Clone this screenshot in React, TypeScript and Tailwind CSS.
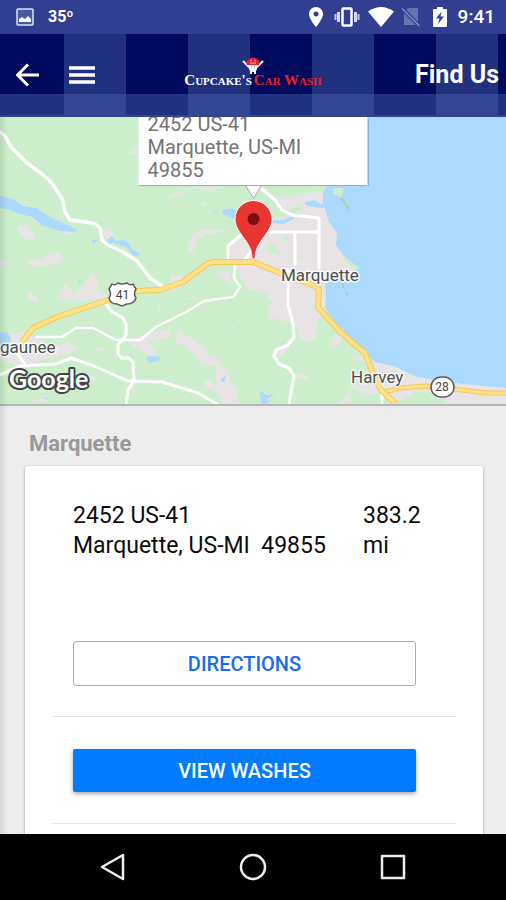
import type { ReactNode } from "react";

function StatusBar() {
  return (
    <div className="flex h-[34px] shrink-0 items-center justify-between bg-[#323f91] pl-4 pr-[11px] text-white">
      <div className="flex items-center gap-[14px]">
        <svg viewBox="0 0 18 18" className="h-[18px] w-[18px]" aria-hidden="true">
          <rect x="1" y="1" width="16" height="16" rx="1" fill="#4c589f" stroke="#dfe2f2" strokeWidth="1.5" />
          <path d="M3 14V11L6 9l3 2 3-3 3 3v3z" fill="#fff" />
        </svg>
        <span className="text-[16px] font-bold leading-5">35º</span>
      </div>
      <div className="flex items-center">
        <svg viewBox="0 0 14 20" className="h-5 w-[14px]" aria-hidden="true">
          <path fillRule="evenodd" d="M7 0C3 0 0 3 0 7c0 5 7 13 7 13s7-8 7-13c0-4-3-7-7-7zm0 4.5a2.5 2.5 0 1 1 0 5 2.5 2.5 0 0 1 0-5z" fill="#fff" />
        </svg>
        <svg viewBox="0 0 26 20" className="ml-[11px] h-5 w-[26px]" aria-hidden="true">
          <rect x="8.500" y="1.500" width="9" height="17" rx="1" fill="#323f91" stroke="#fff" strokeWidth="2.500" />
          <path d="M4.500 5v10M21.500 5v10" stroke="#d5d9ec" strokeWidth="3" />
          <path d="M1.500 7v6M24.500 7v6" stroke="#c5cae5" strokeWidth="2" />
        </svg>
        <svg viewBox="0 0 26 20" className="ml-2 h-5 w-[26px]" aria-hidden="true">
          <path d="M0 4.500Q13-4.500 26 4.500L13 20z" fill="#fff" />
        </svg>
        <svg viewBox="0 0 20 20" className="ml-[7px] h-5 w-5" aria-hidden="true">
          <path d="M7 1h10v17H3V6z" fill="#6973b1" />
          <path d="M1 1.500L19 19.500" stroke="#323f91" strokeWidth="4" />
          <path d="M1 1.500L18.500 19" stroke="#8991c3" strokeWidth="1.5" />
        </svg>
        <svg viewBox="0 0 14 20" className="ml-3 h-5 w-[14px]" aria-hidden="true">
          <path d="M4 0h6v2h3q1 0 1 1v16q0 1-1 1H1q-1 0-1-1V3q0-1 1-1h3z" fill="#fff" />
          <path d="M8.500 4.500L3 11.500h3.500L5 17l6-7.500H7.500z" fill="#323f91" />
        </svg>
        <span className="ml-[11px] text-[19px] font-medium leading-5">9:41</span>
      </div>
    </div>
  );
}

function Logo() {
  return (
    <div className="flex flex-col items-center pb-1" role="img" aria-label="Cupcake's Car Wash">
      <svg viewBox="0 0 22 17" className="h-[17px] w-[22px]" aria-hidden="true">
        <path d="M1 4l6 6M21 4l-6 6" stroke="#fff" strokeWidth="2" />
        <path d="M6 8h10l-1 4-1 2v3h-2v-2h-2v2H8v-3l-1-2z" fill="#fff" />
        <path d="M5 8C3 5 6 3 7 2c2-2 6-2 8 0 2 1 4 3 2 6z" fill="#e3202d" />
        <path d="M8 4l2-1M12 3l2 1M8 6h6" stroke="#f8a8a8" />
        <path d="M9 10h1M12 10h1" stroke="#7a86b0" />
      </svg>
      <div className="-mt-[2px] flex gap-[2px] whitespace-nowrap font-['Liberation_Serif',serif] text-[15px] font-bold leading-4 [font-variant:small-caps]">
        <span className="text-white">Cupcake's</span>
        <span className="text-[#ed2027]">Car Wash</span>
      </div>
    </div>
  );
}

function Header() {
  return (
    <header className="grid h-[83px] shrink-0 grid-cols-[1fr_auto_1fr] items-center border-b-2 border-[#32458a] bg-[#010b5d] bg-[linear-gradient(to_bottom,transparent_60px,rgba(72,96,172,0.45)_60px),repeating-linear-gradient(to_right,#010b5d_0px,#010b5d_62px,#20317e_62px,#20317e_124px)] bg-[position:2px_0px] px-[7px] text-white">
      <div className="flex items-center gap-7 pl-[9px]">
        <button type="button" aria-label="Back" className="h-6 w-6">
          <svg viewBox="0 0 24 24" className="h-6 w-6" fill="none" stroke="currentColor" strokeWidth="3">
            <path d="M23 12H2M12 1.500L1.500 12 12 22.500" />
          </svg>
        </button>
        <button type="button" aria-label="Menu" className="h-5 w-7">
          <svg viewBox="0 0 28 20" className="h-5 w-7" fill="none" stroke="currentColor" strokeWidth="3.500">
            <path d="M1 3h26M1 10h26M1 17h26" />
          </svg>
        </button>
      </div>
      <Logo />
      <h1 className="text-right text-[25px] font-bold leading-7">Find Us</h1>
    </header>
  );
}

function MapView() {
  return (
    <section aria-label="Map" className="relative h-[289px] shrink-0 overflow-hidden border-b-2 border-[#b5b5b5] bg-[#cdeecd]">
      <svg viewBox="0 117 506 287" preserveAspectRatio="xMidYMid slice" className="h-full w-full" fontFamily="Roboto, sans-serif">
        <rect y="116" width="506" height="290" fill="#cdeecd" />
        <g fill="#e8e4e6">
          <path d="M128 154l6-8 3-1-1 9zM17 227l10-2 9 13-7 2-9-5zM41 258l10-5 9-1 3 8-12 4zM60 232l10-3 6 4-10 2zM103 231l7-4 5 9-7 6zM187 252l3-14 8-7 18-2 8 3-18 2-9 6-4 12z" />
          <path d="M160 203l14-9 18-7-6 5zM192 187h32l-12 4-12-1zM202 202l6 3-5 2z" />
          <path d="M228 254l4-10 8-9 10-6 18-4 8-20-3-14 18 6 26-6 10 3 16-7 8-6-12 15-8 10v15l11 25 3 16 17 12v12l-30 4-6 20-8 10-3 18-7 5-8-6-3-12-15-4-8-16-8-12-18-4z" />
          <path d="M57 299l8-17 9 12 10-8 7-13 6 4 1 14 17 7-16 2-18 1zM29 290l10 10-4 3-7-6zM157 303l5 5-3 3zM171 275l14 2-4 10-13 4-3-4 5-3z" />
          <path d="M0 336l24-4 20 9-10 10 34-8 10 6-12 5-24 6-15 8-27-8zM92 349l13-2-5 5zM84 375l17 3-14 5zM55 314l-8 5 5 1zM86 324l8-3v4z" />
          <path d="M127 341l24-9 19-3v8l-21 5 8 13-5 2-20-12zM179 323l5 13 9 2 5 7 9 3-1 6 13 6 11 17-3 9-11-5-1-15-15-2-6-10-8-7-10-4zM204 379l6 1 5 5 15-4 7 7 2 16h-16l-5-10-12-6zM130 380h7l-4 15zM24 402l16-2 7-5 2 7zM59 264l5-8-16 3zM218 270l12 1 2 14-12-9z" />
          <path d="M336 332l8 4-7 11-8-1zM351 356l15 1 2 5-16-3zM278 349l12-3-9 11-8-3zM291 375h16v4l-14-1zM344 397l8-7-2 15h-13zM348 387l30-5 4 9-12 4zM268 305l9-2 2 15-10 2z" />
          <path d="M0 260l10 1-10 6zM28 260h28l4 3-29 4z" />
        </g>
        <path d="M368 116h138v272l-20-1-33-4-37-6-20-10-21-5-10-10-29-29-11-15 1-12-1-11 8-9 20-5 7-3-14-10-10-12 1-13-8-11-6-19v-11l8-10 10-3 8-9-20-3v-30z" fill="#acdafe" />
        <path d="M318 272l38 2-17-14-1-12-8-11-6-19z" fill="#e8e4e6" />
        <path d="M374 362l22 5 20 10 37 6 53 5v16H400l-13-12-14-18z" fill="#e8e4e6" />
        <path d="M382 394l8 10h-8zM398 402l16-10h20l14 12h-48z" fill="#cdeecd" />
        <g fill="#acdafe">
          <path d="M0 196l13 3 10 7 14 2 13 9 13 6 15 7-5 2-13-1-17-5-11-9-15-4-10-4-7-1z" />
          <path d="M91 240h6l-3 4zM107 240l5-4 4 5 8-1 5 3 3 6 9 6-7 1-8-9-13-4-5 3z" />
          <path d="M222 210l9-2 8 4-7 3 9-7v12l-8-1-10-5zM213 212l8-1-7 2zM305 202l9-2 7 4h7l-5 4-10-1-8-2zM273 220h10l13-5-4 5-9 4-10-1z" />
          <path d="M0 333l7-1 4 6-3 9H0zM146 357l5-1 9 1 1 3-12 3zM221 379l5-4-1 6-4 1zM77 281l5-1-2 3zM230 319l4 1-2 2zM185 301h3v2zM44 397l4 1-2 2zM260 391l7 4 8-1-8 5 3 6h-9z" />
        </g>
        <g fill="#cdeecd">
          <path d="M262 189h42l-16 7-20 2-10-6zM259 201l14 5 18 7-7 5-16-1-10-5zM286 212l15-9 4 5-15 7zM264 247l9-4 8 12-12-2zM284 235l6 4-6 4zM297 257l4-2 2 4zM334 188h10l-3 9-8-3z" />
        </g>
        <path d="M341 198l8 11M343 283v5M347 292v3" stroke="#99d8a8" strokeWidth="2" fill="none" />
        <g stroke="#fff" fill="none" strokeLinejoin="round" strokeLinecap="round">
          <path strokeWidth="3.500" d="M0 132l5 4 6 11 16 16 15 11 9 8 12 18 2 12 5 8 16 2 9 2 5 4 2 12 6 5 15 7 14 9 13 17 12 8" />
          <path strokeWidth="2.500" d="M36 337h26l14-9h17l23 12h24l16-13 32-16 16-10 29-4 7-10-6-9 1-14" />
          <path strokeWidth="3" d="M105 302l6 9 12 7 3 6v11l-8 10v9l3 4h8l4 4 1 18-6 10-2 15" />
          <path strokeWidth="3" d="M0 375l20-9 36-2 15-6 23 8 34 15 34 1 36 11 24 14M12 346l12 17" />
          <path strokeWidth="3" d="M262 189l13 11 7 10 10 5 27 3v50M266 232h52M295 234v30M228 258v-12l13-11 15-4M253 249l-10 13" />
          <path strokeWidth="3" d="M288 270v35l5 19 1 13-6 8-12 5-2 6 5 8 10 4 5 8-5 28" />
          <path strokeWidth="3" d="M382 383v20" />
        </g>
        <g fill="none" strokeLinejoin="round">
          <path d="M385 392l15-4 26-2 27 3 33 4h20" stroke="#f3c861" strokeWidth="5" />
          <path d="M385 392l15-4 26-2 27 3 33 4h20" stroke="#ffe083" strokeWidth="3" />
          <path d="M22 342l11-14 24-11 24-8 24-8 18-6 14-4 23-1 23-8 24-18 5-2h41l27 11 33 12 6 4-1 18 22 25 25 21 8 20 8 17 15 14" stroke="#f3c861" strokeWidth="6" />
          <path d="M22 342l11-14 24-11 24-8 24-8 18-6 14-4 23-1 23-8 24-18 5-2h41l27 11 33 12 6 4-1 18 22 25 25 21 8 20 8 17 15 14" stroke="#ffe083" strokeWidth="4" />
        </g>
        <path d="M112 284q3 2 6-1 4 2 9 0 3 3 6 1l3 5q-3 5 0 9-2 6-9 6l-5 2-5-2q-7 0-8-6 3-4 0-9z" fill="#fff" stroke="#5c5c5c" strokeWidth="1.5" />
        <text x="122.500" y="299" textAnchor="middle" fontSize="12" fill="#444">41</text>
        <rect x="431" y="377" width="23" height="20" rx="10" fill="#fff" stroke="#5c5c5c" strokeWidth="1.500" />
        <text x="442" y="391" textAnchor="middle" fontSize="12" fill="#444">28</text>
        <g fill="#4e4e4e" stroke="#fff" strokeWidth="3" strokeOpacity="0.800" paintOrder="stroke" strokeLinejoin="round" fontSize="17">
          <text x="281" y="281">Marquette</text>
          <text x="351" y="383">Harvey</text>
          <text x="0" y="353">gaunee</text>
        </g>
        <text x="9" y="388" fontFamily="Lato, sans-serif" fontWeight="700" fontSize="25" fill="#fff" stroke="#444" strokeWidth="4" paintOrder="stroke" strokeLinejoin="round">Google</text>
        <path d="M245 184.500h17l-8.500 14z" fill="#fff" stroke="#aaa" />
        <path d="M252 259c0-12-6-17-11-25-3-4-6-9-6-15a18.500 18.500 0 0 1 37 0c0 6-3 11-6 15-5 8-11 13-11 25z" fill="#ea3535" stroke="#fff" strokeWidth="1" />
        <circle cx="253.500" cy="219" r="6" fill="#7d0c10" />
      </svg>
      <div className="absolute left-1/2 top-0 w-[229px] -translate-x-1/2 border-b border-[#aaa] bg-white px-[9px] pb-[3px] text-xl leading-[23px] text-[#747474] shadow-[1px_0px_1px_rgba(0,0,0,0.2)]">
        <address className="-mt-1 not-italic">
          2452 US-41
          <br />
          Marquette, US-MI
          <br />
          49855
        </address>
      </div>
    </section>
  );
}

function LocationCard() {
  return (
    <article className="ml-[25px] mr-[23px] rounded-[3px] bg-white pb-10 pl-[26px] pr-[27px] pt-[35px] shadow-[0px_1px_3px_rgba(0,0,0,0.35)]">
      <div className="flex h-[140px] justify-between px-[22px] text-[23px] leading-[30px] text-[#0c0c0c]">
        <address className="whitespace-pre not-italic">{"2452 US-41\nMarquette, US-MI  49855"}</address>
        <p className="w-[71px] shrink-0">383.2 mi</p>
      </div>
      <div className="border-b border-[#e3e3e3] pb-[30px] pl-[22px] pr-10">
        <button type="button" className="h-[45px] w-full rounded-[3px] border border-[#8fabfa] bg-white text-[20px] font-medium leading-6 text-[#176cf0]">
          DIRECTIONS
        </button>
      </div>
      <div className="border-b border-[#e9e9e9] pb-[31px] pl-[22px] pr-10 pt-8">
        <button type="button" className="h-[43px] w-full rounded-[2px] bg-[#007aff] text-[20px] font-medium leading-6 text-white shadow-[0px_2px_4px_rgba(0,0,0,0.35)]">
          VIEW WASHES
        </button>
      </div>
    </article>
  );
}

function NavKey({ label, children }: { label: string; children: ReactNode }) {
  return (
    <button type="button" aria-label={label} className="flex h-full items-center justify-center">
      <svg viewBox="0 0 28 28" className="h-7 w-7" fill="none" stroke="currentColor" strokeWidth="2.500" strokeLinejoin="round">
        {children}
      </svg>
    </button>
  );
}

export default function App() {
  return (
    <div className="flex h-screen flex-col overflow-hidden bg-[#ededed] font-[Roboto,sans-serif]">
      <StatusBar />
      <Header />
      <main className="relative flex min-h-0 flex-1 flex-col overflow-hidden">
        <MapView />
        <h2 className="mb-2 ml-[29px] mt-6 text-[22px] font-bold leading-7 text-[#999]">Marquette</h2>
        <LocationCard />
        <div className="pointer-events-none absolute inset-y-0 left-0 w-2 bg-linear-to-r from-black/10 to-transparent" />
      </main>
      <nav aria-label="System" className="grid h-[66px] shrink-0 grid-cols-3 bg-black px-[43px] text-[#eee]">
        <NavKey label="System back">
          <path d="M24 2v24L3 14z" />
        </NavKey>
        <NavKey label="Home">
          <circle cx="14" cy="14" r="12" />
        </NavKey>
        <NavKey label="Recent apps">
          <rect x="3" y="3" width="22" height="22" />
        </NavKey>
      </nav>
    </div>
  );
}
